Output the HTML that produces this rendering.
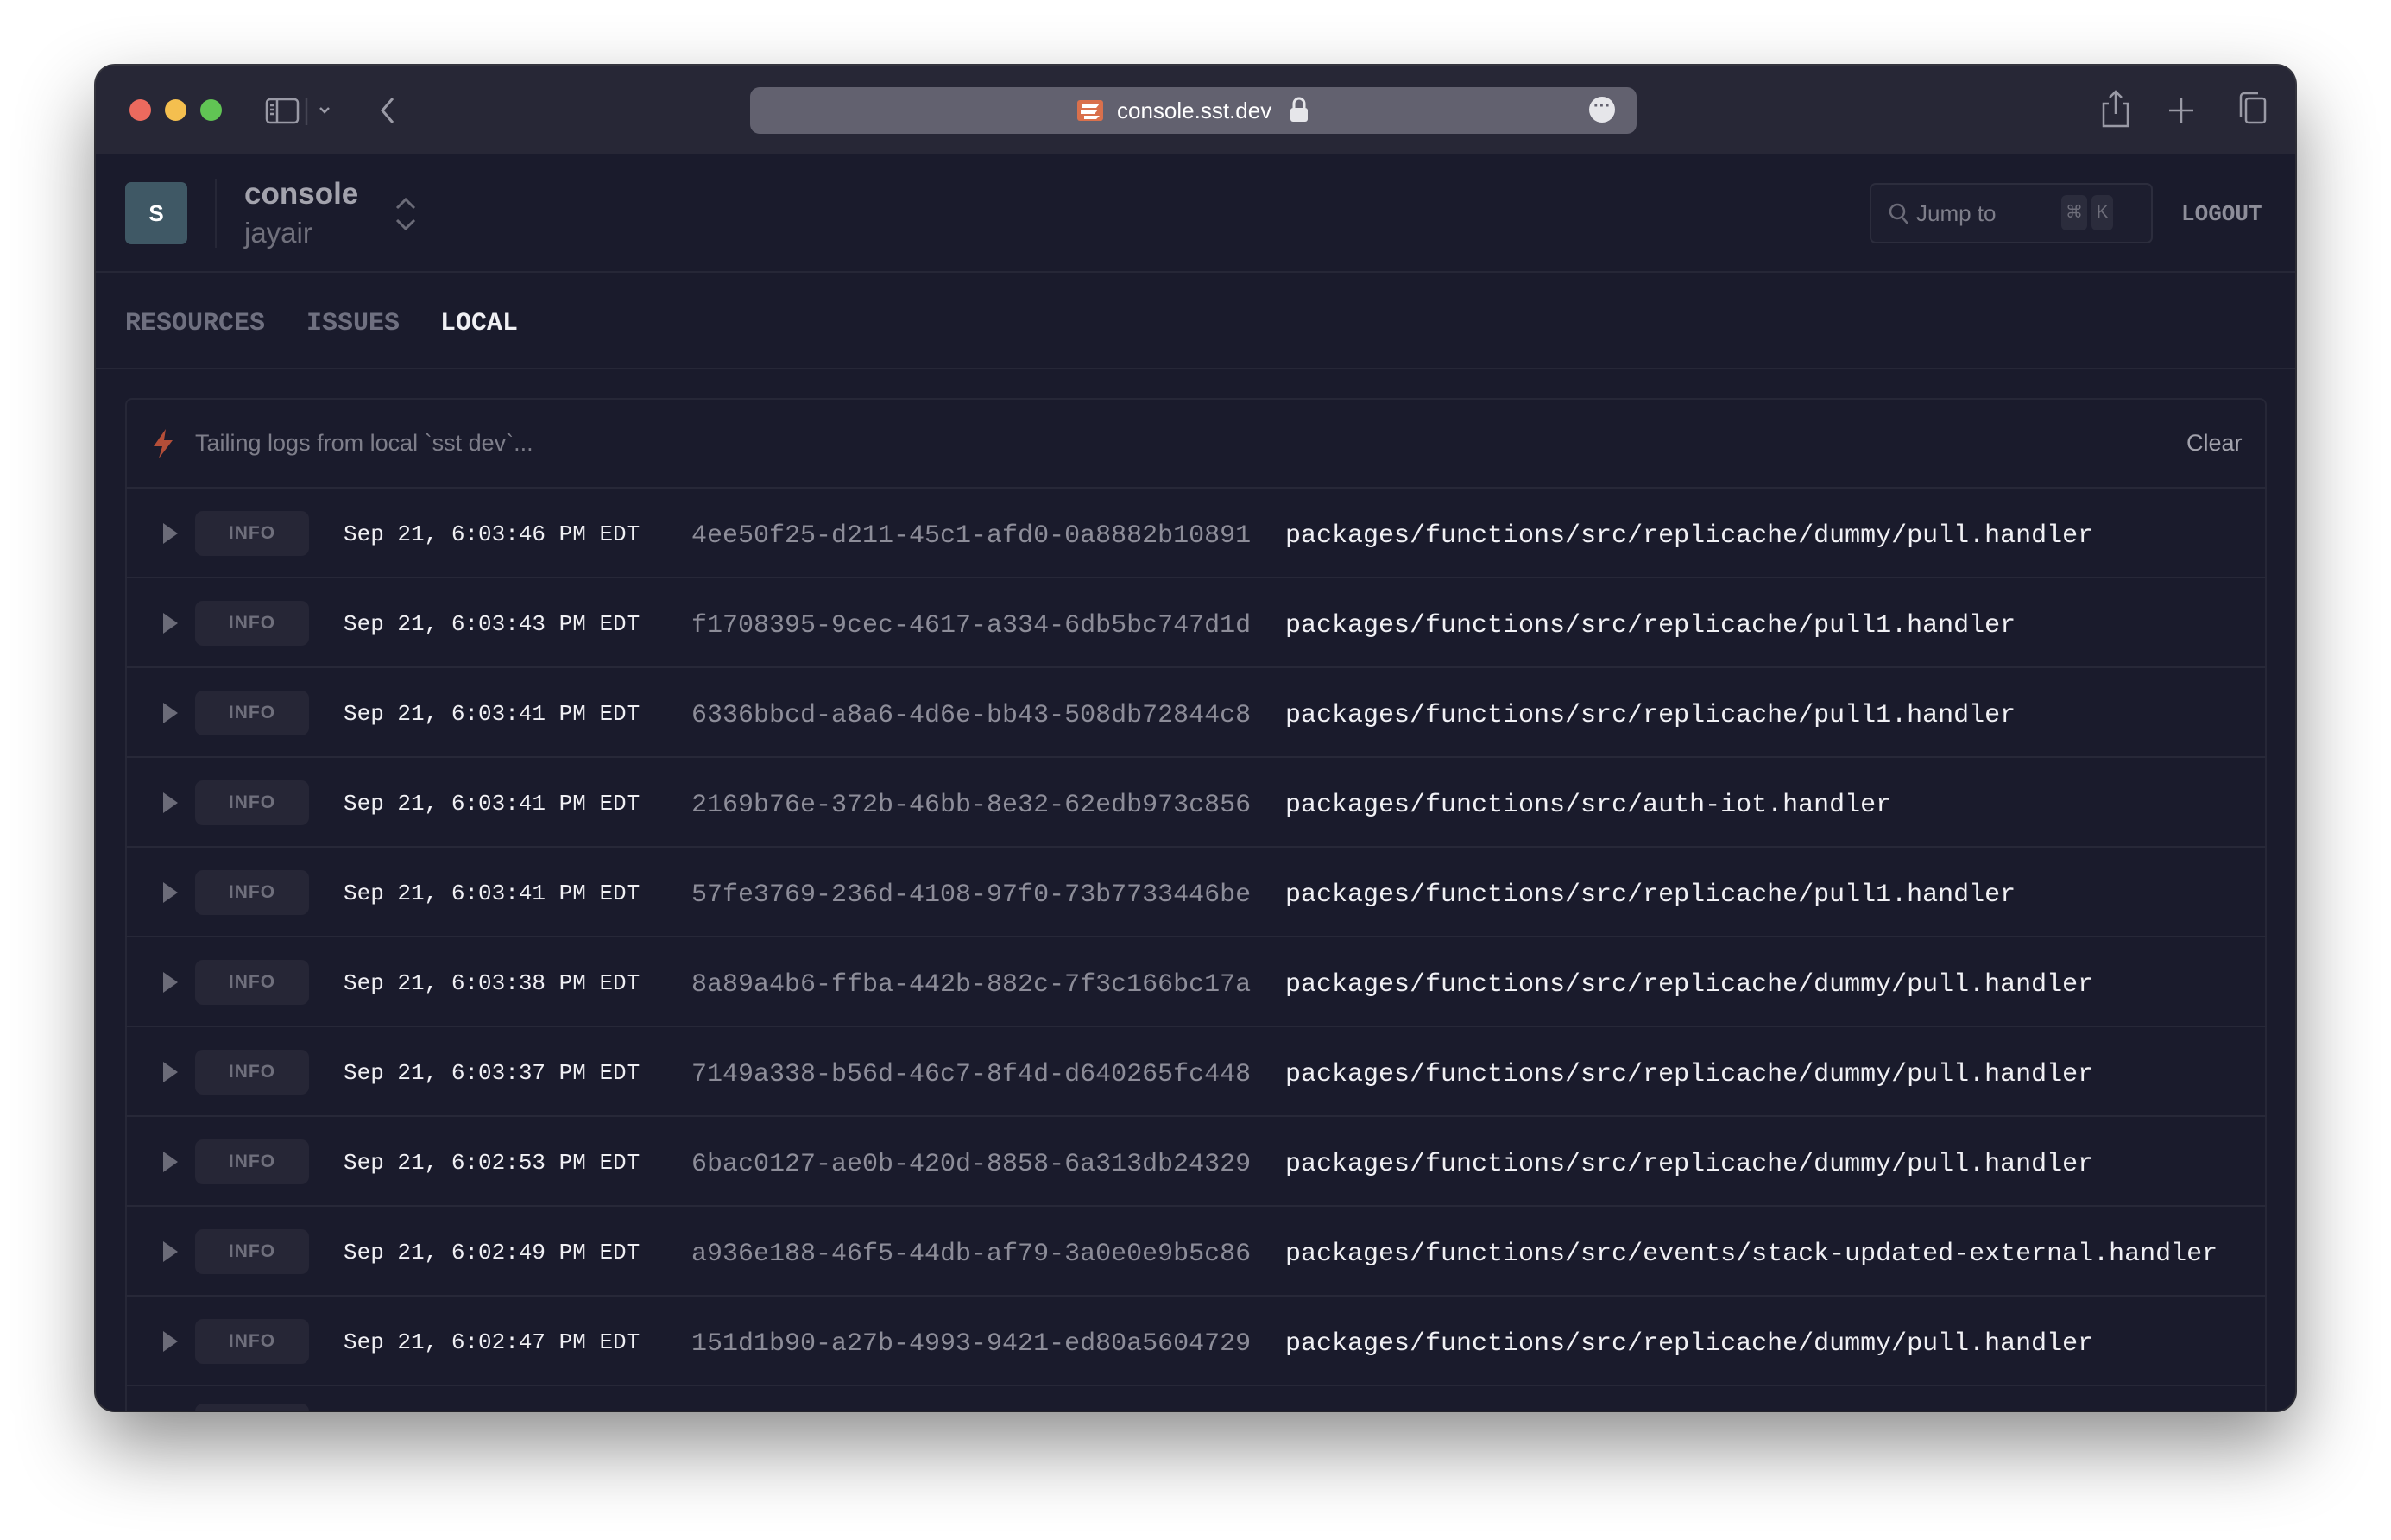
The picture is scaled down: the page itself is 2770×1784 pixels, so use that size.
<!DOCTYPE html>
<html><head><meta charset="utf-8"><style>
*{margin:0;padding:0;box-sizing:border-box}
body{width:2770px;height:1784px;background:#fff;position:relative;overflow:hidden;font-family:"Liberation Sans",sans-serif}
.win{position:absolute;left:111px;top:76px;width:2548px;height:1558px;border-radius:22px;background:#1a1b2c;overflow:hidden;box-shadow:0 40px 90px rgba(0,0,0,.45),0 0 0 2px #3a3a44}
.tb{position:absolute;left:0;top:0;width:100%;height:102px;background:#272736}
.dot{position:absolute;top:39px;width:25px;height:25px;border-radius:50%}
.abs{position:absolute}
.mono{font-family:"Liberation Mono",monospace}
.row{position:absolute;left:34px;width:2481px;height:104px;border-top:2px solid #272838}
.tri{position:absolute;left:44px;top:40px;width:0;height:0;border-left:17px solid #6b6b78;border-top:12px solid transparent;border-bottom:12px solid transparent}
.badge{position:absolute;left:81px;top:26px;width:132px;height:52px;border-radius:9px;background:#262636;color:#6f6f7c;font-weight:bold;font-size:21px;letter-spacing:1px;text-align:center;line-height:52px}
.dt{position:absolute;left:253px;top:38px;font-size:26px;color:#f0f0f4;font-family:"Liberation Mono",monospace}
.id{position:absolute;left:656px;top:38px;font-size:30px;color:#8d8d99;font-family:"Liberation Mono",monospace}
.pt{position:absolute;left:1344px;top:38px;font-size:30px;color:#f0f0f4;font-family:"Liberation Mono",monospace}
</style></head><body>
<div class="win">
 <div class="tb">
  <div class="dot" style="left:39px;background:#ec6a5e"></div>
  <div class="dot" style="left:80px;background:#f4bf4f"></div>
  <div class="dot" style="left:121px;background:#61c554"></div>
  <svg class="abs" style="left:196px;top:36px" width="120" height="34" viewBox="0 0 120 34" fill="none" stroke="#9a9aa6" stroke-width="2.5"><rect x="2" y="3" width="36" height="27" rx="4"/><line x1="14" y1="3" x2="14" y2="30"/><line x1="6" y1="10" x2="10" y2="10"/><line x1="6" y1="15" x2="10" y2="15"/><line x1="6" y1="20" x2="10" y2="20"/><line x1="48" y1="1" x2="48" y2="33" stroke="#444452"/><polyline points="64,13 69,18 74,13"/></svg>
  <svg class="abs" style="left:326px;top:34px" width="24" height="36" viewBox="0 0 24 36" fill="none" stroke="#9a9aa6" stroke-width="3"><polyline points="18,4 6,18 18,32"/></svg>
  <div class="abs" style="left:758px;top:25px;width:1027px;height:54px;border-radius:11px;background:#62616f"></div>
  <svg class="abs" style="left:1135px;top:38px" width="34" height="28" viewBox="0 0 34 28"><rect x="2" y="2" width="30" height="24" rx="3" fill="#d9704c"/><path d="M8 6h20l-4 5H8zM6 13h20l-4 5H6zM10 20h18l-4 4H10z" fill="#fff"/></svg>
  <div class="abs" style="left:1183px;top:37px;font-size:26px;color:#fff">console.sst.dev</div>
  <svg class="abs" style="left:1383px;top:36px" width="22" height="30" viewBox="0 0 22 30"><path d="M5 13V8a6 6 0 0 1 12 0v5" stroke="#e6e6ea" stroke-width="3" fill="none"/><rect x="1" y="13" width="20" height="16" rx="3" fill="#e6e6ea"/></svg>
  <div class="abs" style="left:1730px;top:36px;width:30px;height:30px;border-radius:50%;background:#e6e6ea;color:#62616f;font-size:20px;line-height:22px;text-align:center;font-weight:bold">···</div>
  <svg class="abs" style="left:2320px;top:28px" width="200" height="46" viewBox="0 0 200 46" fill="none" stroke="#9a9aa6" stroke-width="2.5"><path d="M12 16H6v26h28V16h-6M20 2v26M13 9l7-7 7 7"/><path d="M96 10v28M82 24h28"/><rect x="171" y="10" width="22" height="28" rx="3"/><path d="M165 32V8a4 4 0 0 1 4-4h16"/></svg>
 </div>
 <div class="abs" style="left:34px;top:135px;width:72px;height:72px;border-radius:7px;background:#3f5865;color:#fff;font-weight:bold;font-size:26px;text-align:center;line-height:72px">S</div>
 <div class="abs" style="left:138px;top:131px;width:2px;height:80px;background:#262737"></div>
 <div class="abs" style="left:172px;top:129px;font-size:35px;font-weight:bold;color:#a3a3ad">console</div>
 <div class="abs" style="left:172px;top:175px;font-size:33px;color:#70707c">jayair</div>
 <svg class="abs" style="left:346px;top:152px" width="26" height="40" viewBox="0 0 26 40" fill="none" stroke="#6b6b78" stroke-width="3"><polyline points="3,13 13,3 23,13"/><polyline points="3,27 13,37 23,27"/></svg>
 <div class="abs" style="left:2055px;top:136px;width:328px;height:70px;border:2px solid #2c2d3d;border-radius:7px;background:#1d1e2f"></div>
 <svg class="abs" style="left:2076px;top:158px" width="26" height="28" viewBox="0 0 26 28" fill="none" stroke="#6b6b78" stroke-width="2.5"><circle cx="11" cy="11" r="8"/><line x1="17" y1="18" x2="23" y2="25"/></svg>
 <div class="abs" style="left:2109px;top:156px;font-size:26px;color:#7e7e8a">Jump to</div>
 <div class="abs" style="left:2277px;top:150px;width:30px;height:41px;border-radius:6px;background:#2b2c3c;color:#6e6e7a;font-size:20px;text-align:center;line-height:41px">⌘</div>
 <div class="abs" style="left:2312px;top:150px;width:25px;height:41px;border-radius:6px;background:#2b2c3c;color:#6e6e7a;font-size:20px;text-align:center;line-height:41px">K</div>
 <div class="abs mono" style="left:2416px;top:157px;font-size:26px;color:#8d8d99;font-weight:bold">LOGOUT</div>
 <div class="abs" style="left:0;top:238px;width:100%;height:2px;background:#262737"></div>
 <div class="abs mono" style="left:34px;top:282px;font-size:30px;color:#6f7080;font-weight:bold">RESOURCES</div>
 <div class="abs mono" style="left:244px;top:282px;font-size:30px;color:#6f7080;font-weight:bold">ISSUES</div>
 <div class="abs mono" style="left:399px;top:282px;font-size:30px;color:#f0f0f4;font-weight:bold">LOCAL</div>
 <div class="abs" style="left:0;top:350px;width:100%;height:2px;background:#262737"></div>
 <div class="abs" style="left:34px;top:385px;width:2481px;height:1300px;border:2px solid #262737;border-radius:8px"></div>
 <svg class="abs" style="left:64px;top:420px" width="28" height="36" viewBox="0 0 28 36"><path d="M17 1L3 21h10l-4 14 16-21H15z" fill="#b44e38"/></svg>
 <div class="abs" style="left:115px;top:422px;font-size:27px;color:#7e7e8a">Tailing logs from local `sst dev`...</div>
 <div class="abs" style="left:2422px;top:422px;font-size:27px;color:#a3a3ad">Clear</div>
 <div class="row" style="top:488px"><div class="tri"></div><div class="badge">INFO</div><div class="dt">Sep 21, 6:03:46 PM EDT</div><div class="id">4ee50f25-d211-45c1-afd0-0a8882b10891</div><div class="pt">packages/functions/src/replicache/dummy/pull.handler</div></div>
 <div class="row" style="top:592px"><div class="tri"></div><div class="badge">INFO</div><div class="dt">Sep 21, 6:03:43 PM EDT</div><div class="id">f1708395-9cec-4617-a334-6db5bc747d1d</div><div class="pt">packages/functions/src/replicache/pull1.handler</div></div>
 <div class="row" style="top:696px"><div class="tri"></div><div class="badge">INFO</div><div class="dt">Sep 21, 6:03:41 PM EDT</div><div class="id">6336bbcd-a8a6-4d6e-bb43-508db72844c8</div><div class="pt">packages/functions/src/replicache/pull1.handler</div></div>
 <div class="row" style="top:800px"><div class="tri"></div><div class="badge">INFO</div><div class="dt">Sep 21, 6:03:41 PM EDT</div><div class="id">2169b76e-372b-46bb-8e32-62edb973c856</div><div class="pt">packages/functions/src/auth-iot.handler</div></div>
 <div class="row" style="top:904px"><div class="tri"></div><div class="badge">INFO</div><div class="dt">Sep 21, 6:03:41 PM EDT</div><div class="id">57fe3769-236d-4108-97f0-73b7733446be</div><div class="pt">packages/functions/src/replicache/pull1.handler</div></div>
 <div class="row" style="top:1008px"><div class="tri"></div><div class="badge">INFO</div><div class="dt">Sep 21, 6:03:38 PM EDT</div><div class="id">8a89a4b6-ffba-442b-882c-7f3c166bc17a</div><div class="pt">packages/functions/src/replicache/dummy/pull.handler</div></div>
 <div class="row" style="top:1112px"><div class="tri"></div><div class="badge">INFO</div><div class="dt">Sep 21, 6:03:37 PM EDT</div><div class="id">7149a338-b56d-46c7-8f4d-d640265fc448</div><div class="pt">packages/functions/src/replicache/dummy/pull.handler</div></div>
 <div class="row" style="top:1216px"><div class="tri"></div><div class="badge">INFO</div><div class="dt">Sep 21, 6:02:53 PM EDT</div><div class="id">6bac0127-ae0b-420d-8858-6a313db24329</div><div class="pt">packages/functions/src/replicache/dummy/pull.handler</div></div>
 <div class="row" style="top:1320px"><div class="tri"></div><div class="badge">INFO</div><div class="dt">Sep 21, 6:02:49 PM EDT</div><div class="id">a936e188-46f5-44db-af79-3a0e0e9b5c86</div><div class="pt">packages/functions/src/events/stack-updated-external.handler</div></div>
 <div class="row" style="top:1424px"><div class="tri"></div><div class="badge">INFO</div><div class="dt">Sep 21, 6:02:47 PM EDT</div><div class="id">151d1b90-a27b-4993-9421-ed80a5604729</div><div class="pt">packages/functions/src/replicache/dummy/pull.handler</div></div>
 <div class="row" style="top:1528px"><div class="badge" style="top:20px"></div></div>
</div>
</body></html>
